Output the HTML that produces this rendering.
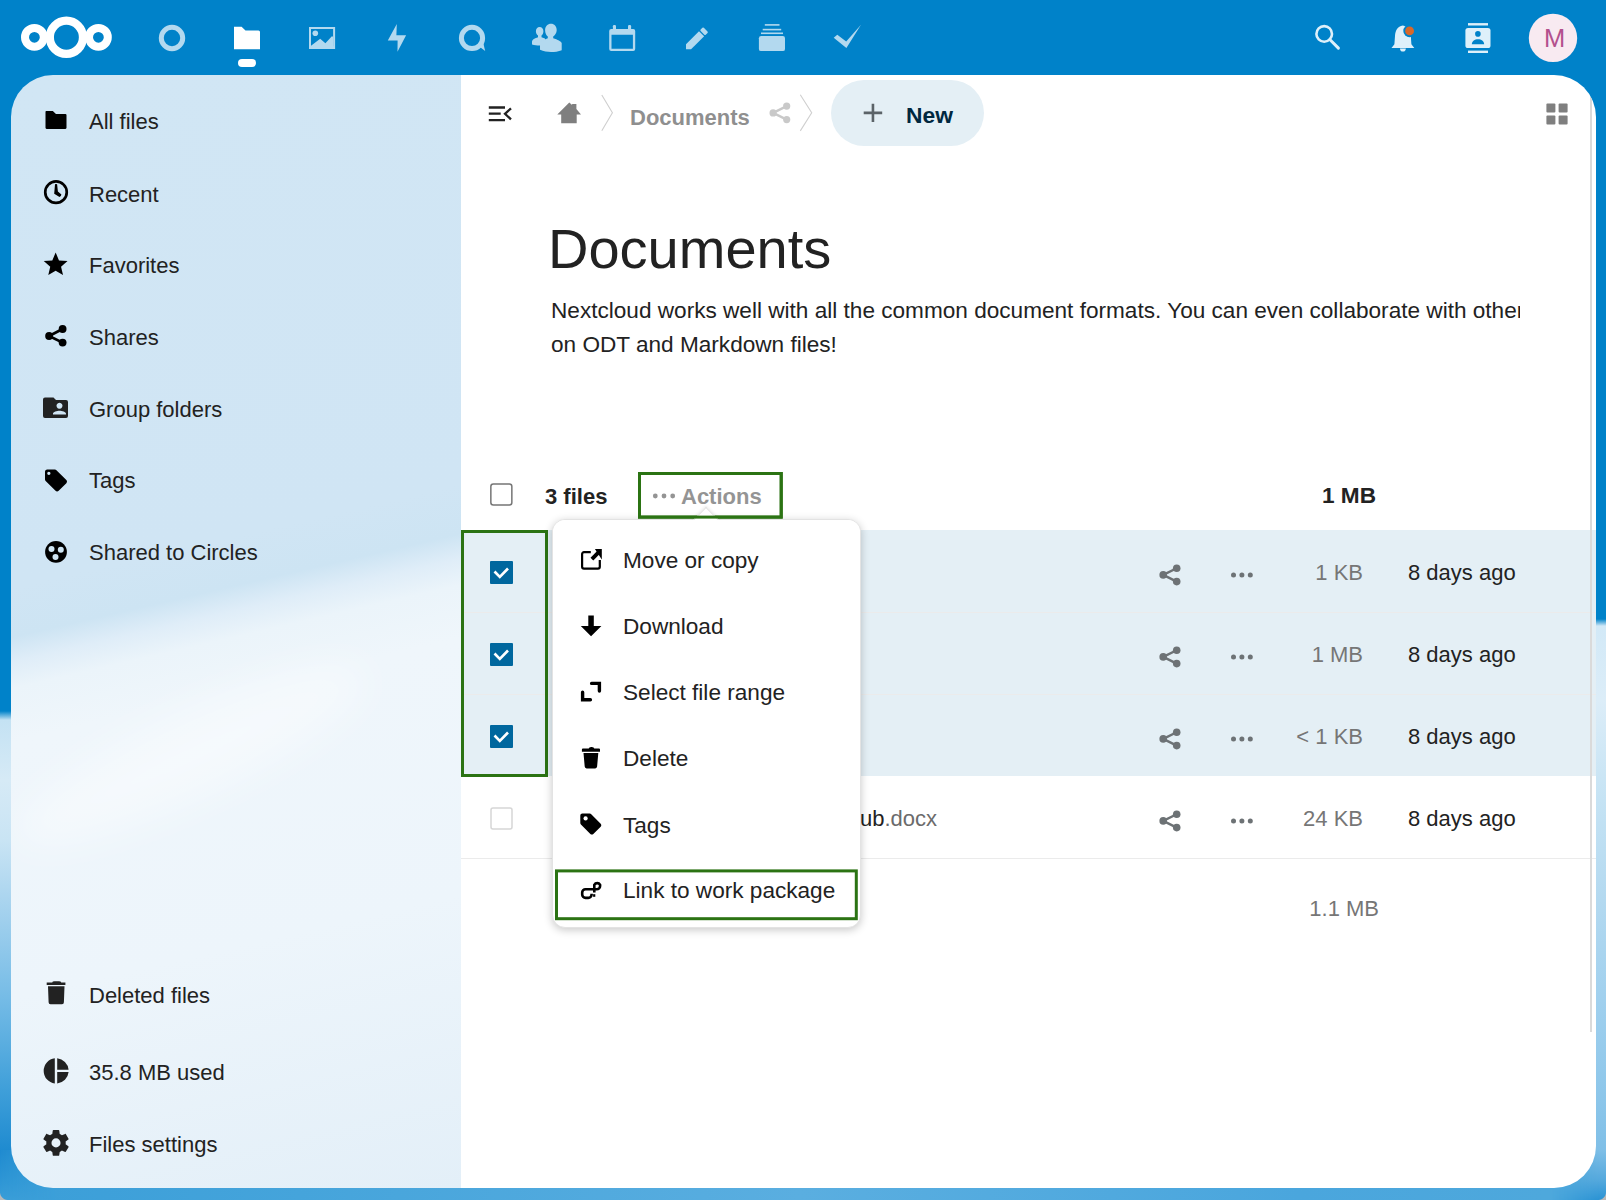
<!DOCTYPE html>
<html><head><meta charset="utf-8">
<style>
html,body{margin:0;padding:0;width:1606px;height:1200px;overflow:hidden;}
body{position:relative;background:#0082c9;font-family:"Liberation Sans",sans-serif;color:#222;}
.a{position:absolute;}
svg{position:absolute;overflow:visible;}
.t{position:absolute;white-space:nowrap;font-size:22px;line-height:30px;height:30px;}
.b{font-weight:bold;}
</style></head><body>
<!-- background strips -->
<div class="a" id="bgl" style="left:0;top:0;width:60px;height:1200px;background:linear-gradient(180deg,#0082c9 0,#0082c9 711px,#c4e2f3 720px,#d6eaf6 780px,#c9e4f4 840px,#a5d2ee 910px,#74bbe6 1000px,#3f9fd9 1090px,#1f8bd0 1150px,#2d96d5 1180px,#3a9ed8 1200px);"></div>
<div class="a" id="bgr" style="left:1546px;top:0;width:60px;height:1200px;background:linear-gradient(180deg,#0082c9 0,#0082c9 619px,#d2e9f7 626px,#dcedf8 700px,#c5e3f4 800px,#b3d9f0 900px,#a0d0ee 1000px,#8cc6ea 1100px,#7fbfe7 1150px,#55a9dd 1180px,#2a93d4 1200px);"></div>
<div class="a" id="bgb" style="left:0;top:1150px;width:1606px;height:50px;background:linear-gradient(90deg,#3a9ed8 0,#45a4db 300px,#5aaee0 800px,#4aa6dd 1300px,#4ea8dc 1546px);-webkit-mask-image:linear-gradient(90deg,transparent 0,#000 56px,#000 1550px,transparent 1600px);mask-image:linear-gradient(90deg,transparent 0,#000 56px,#000 1550px,transparent 1600px);"></div>

<!-- header -->
<svg width="1606" height="75" style="left:0;top:0" viewBox="0 0 1606 75">
 <g fill="none" stroke="#fff">
  <circle cx="66.4" cy="37.3" r="16.6" stroke-width="8.3"/>
  <circle cx="34.4" cy="37.3" r="9.4" stroke-width="8"/>
  <circle cx="98.4" cy="37.3" r="9.4" stroke-width="8"/>
 </g>
 <g fill="#b3d9ef">
  <!-- dashboard -->
  <circle cx="172" cy="38" r="10.7" fill="none" stroke="#b3d9ef" stroke-width="5"/>
  <!-- photos -->
  <path d="M309,26.9H335.1V49H309Z M311,28.9V46.2H333.1V28.9Z" fill-rule="evenodd"/>
  <circle cx="315.3" cy="33.3" r="2.8"/>
  <path d="M311,45.8L320.2,38.7L325.4,43.2L332.1,36.1L333.1,37.2V47H311Z"/>
  <!-- activity -->
  <path d="M396.8,24.1L387.8,40.6H397.6L397.5,51.8L406.1,35.3H396.4Z"/>
  <!-- talk -->
  <circle cx="472" cy="37.9" r="10.6" fill="none" stroke="#b3d9ef" stroke-width="5"/>
  <path d="M478.5,46L485.2,51L483,42Z"/>
  <!-- contacts -->
  <path d="M539.6,27C537.4,27 535.9,28.8 535.9,31.3C535.9,33.2 536.7,34.8 538,35.6V37.3C535,38.3 532.2,39.3 532,41.8L532,44.5C534.5,45.3 537,45.5 539.5,45.5L545,45V38.5L541.5,37.2V35.6C542.7,34.8 543.4,33.2 543.4,31.3C543.4,28.8 541.9,27 539.6,27Z"/>
  <path d="M551,23.8C547.7,23.8 545.1,26.4 545.1,30.3C545.1,33.3 546.3,35.5 547.8,36.5V38.3C544.5,39.5 540.8,40.7 540,42.5V49.8C543.5,51.5 547.5,52 551,52C554.5,52 558.5,51.5 561.7,50.2V43C561.3,41.3 557.5,39.6 553.2,38.2V36.5C554.8,35.5 556.7,33.3 556.7,30.3C556.7,26.4 554.3,23.8 551,23.8Z"/>
  <!-- calendar -->
  <path d="M611.2,28.9H633.2A2,2 0 0 1 635.2,30.9V49.1A2,2 0 0 1 633.2,51.1H611.2A2,2 0 0 1 609.2,49.1V30.9A2,2 0 0 1 611.2,28.9Z M611.5,34.7V48.8H632.9V34.7Z" fill-rule="evenodd"/>
  <rect x="612.9" y="25" width="3.1" height="7" rx="1.2"/>
  <rect x="628" y="25" width="3.1" height="7" rx="1.2"/>
  <!-- notes pencil -->
  <g transform="translate(688.55,46.75) rotate(-45)">
   <path d="M0,-3.6H18.4V3.6H0L-3.6,0Z"/>
   <rect x="19.7" y="-3.6" width="4.5" height="7.2" rx="1"/>
  </g>
  <!-- deck -->
  <rect x="764.8" y="24.1" width="14.7" height="1.6"/>
  <rect x="762.7" y="28.8" width="18.5" height="1.6"/>
  <rect x="761" y="32.5" width="22" height="1.6"/>
  <rect x="758.9" y="36" width="26.1" height="15.1" rx="2.2"/>
  <!-- tasks check -->
  <path d="M833.7,37.8L837.3,34.8L846.2,41.5L861,24.8L846.4,48Z"/>
 </g>
 <!-- files active -->
 <path d="M234,26.8H241.6L245.5,30.5H258.5A1.5,1.5 0 0 1 260,32V49.2H234Z" fill="#fff"/>
 <rect x="238" y="59" width="18" height="8" rx="4" fill="#fff"/>
 <!-- right icons -->
 <g fill="#def0fa">
  <circle cx="1324.2" cy="33.9" r="7.8" fill="none" stroke="#def0fa" stroke-width="2.6"/>
  <path d="M1329.8,39.5L1338.4,48.1" stroke="#def0fa" stroke-width="3" stroke-linecap="round" fill="none"/>
  <path d="M1402.8,25.6C1397.5,26.3 1395.3,31 1395,36L1394.4,44.3L1391.5,48H1414.3L1411.4,44.3L1410.8,36C1410.5,31 1408,26.3 1402.8,25.6Z"/>
  <path d="M1400,48.5H1405.8A2.9,3.1 0 0 1 1400,48.5Z"/>
  <circle cx="1409.6" cy="30.9" r="6.3" fill="#0082c9"/>
  <circle cx="1409.6" cy="30.9" r="4.4" fill="#d9682a"/>
  <rect x="1468" y="23.1" width="20" height="2.4"/>
  <rect x="1468" y="50.6" width="20" height="2.4"/>
  <rect x="1465.4" y="28" width="25.1" height="20" rx="2.6"/>
  <circle cx="1477.9" cy="33.9" r="2.8" fill="#0082c9"/>
  <path d="M1471.8,44.3C1472.2,40.8 1474.5,39.3 1478,39.3C1481.5,39.3 1483.8,40.8 1484.2,44.3Z" fill="#0082c9"/>
 </g>
 <circle cx="1553" cy="37.9" r="24.2" fill="#f8eaf1"/>
</svg>
<div class="t" style="left:1530.5px;top:23px;width:48px;text-align:center;font-size:25.5px;color:#b3508d;">M</div>

<!-- sidebar -->
<div class="a" id="side" style="left:11px;top:75px;width:450px;height:1113px;border-radius:42px 0 0 42px;background:linear-gradient(167deg,#d1e6f4 0,#d0e5f4 500px,#cde4f3 548px,#dfedf8 572px,#ebf4fa 598px,#eff6fb 650px,#edf5fb 900px,#e3eff8 1186px);overflow:hidden;">
 <div class="a" style="left:-10px;top:640px;width:380px;height:80px;border-radius:50%;background:rgba(255,255,255,0.4);filter:blur(18px);transform:rotate(-25deg);"></div>
</div>

<svg width="460" height="1200" style="left:0;top:0" viewBox="0 0 460 1200">
 <g fill="#000">
  <path d="M46.2,111H52.8L56,114H65.4A1.1,1.1 0 0 1 66.5,115.1V127.8A1.1,1.1 0 0 1 65.4,128.9H46.6A1.1,1.1 0 0 1 45.5,127.8V111.7A0.7,0.7 0 0 1 46.2,111Z"/>
  <circle cx="56" cy="192.2" r="10.75" fill="none" stroke="#000" stroke-width="2.7"/>
  <path d="M55,184.2Q56,183.6 57.1,184.2L57.9,191.6L61.4,194.6Q61.2,196.5 59.5,196.9L54.2,193.7Z"/>
  <path transform="translate(41.37,250.12) scale(1.19)" d="M12,17.27L18.18,21L16.54,13.97L22,9.24L14.81,8.63L12,2L9.19,8.63L2,9.24L7.45,13.97L5.82,21L12,17.27Z"/>
  <circle cx="49.1" cy="336" r="3.9"/><circle cx="62.6" cy="329" r="3.9"/><circle cx="62.6" cy="342.6" r="3.9"/><path d="M49.1,336L62.6,329M49.1,336L62.6,342.6" stroke="#000" stroke-width="2.7"/>
  <path fill="#222" fill-rule="evenodd" d="M45,397.5H53.5L56,400H66A2,2 0 0 1 68,402V416A2,2 0 0 1 66,418H45A2,2 0 0 1 43,416V399.5A2,2 0 0 1 45,397.5Z M59.5,408.8A3,3 0 1 0 59.49,408.8Z M53,414.6H66V413.8C66,411.8 62,410.8 59.5,410.8C57,410.8 53,411.8 53,413.8Z"/>
  <path transform="translate(42.8,467.3) scale(1.1)" d="M5.5,7A1.5,1.5 0 0,1 4,5.5A1.5,1.5 0 0,1 5.5,4A1.5,1.5 0 0,1 7,5.5A1.5,1.5 0 0,1 5.5,7M21.41,11.58L12.41,2.58C12.05,2.22 11.55,2 11,2H4C2.89,2 2,2.89 2,4V11C2,11.55 2.22,12.05 2.59,12.41L11.58,21.41C11.95,21.77 12.45,22 13,22C13.55,22 14.05,21.77 14.41,21.41L21.41,14.41C21.78,14.05 22,13.55 22,13C22,12.44 21.77,11.94 21.41,11.58Z"/>
  <circle cx="56" cy="551.9" r="10.9"/>
  <circle cx="51.5" cy="549" r="3" fill="#d0e6f4"/>
  <circle cx="60.8" cy="549.8" r="3" fill="#d0e6f4"/>
  <circle cx="55.5" cy="557" r="3" fill="#d0e6f4"/>
 </g>
 <g fill="#222">
  <path d="M52.2,982.6Q52.4,981.2 54.5,981.2H58.9Q61,981.2 61.2,982.6H65.4V985H46.7V982.6Z M48,986.3H64.5L63.9,1002.3A1.9,1.9 0 0 1 62,1004.2H50.5A1.9,1.9 0 0 1 48.6,1002.3Z"/>
  <path d="M54.8,1058.3V1083.5A12.7,12.7 0 0 1 54.8,1058.3Z M57.2,1058.3A12.7,12.7 0 0 1 68.6,1069.7H57.2Z M57.2,1072.1H68.6A12.7,12.7 0 0 1 57.2,1083.5Z"/>
  <path transform="translate(40.45,1127.35) scale(1.296)" d="M12,15.5A3.5,3.5 0 0,1 8.5,12A3.5,3.5 0 0,1 12,8.5A3.5,3.5 0 0,1 15.5,12A3.5,3.5 0 0,1 12,15.5M19.43,12.97C19.47,12.65 19.5,12.33 19.5,12C19.5,11.67 19.47,11.34 19.43,11L21.54,9.37C21.73,9.22 21.78,8.95 21.66,8.73L19.66,5.27C19.54,5.05 19.27,4.96 19.05,5.05L16.56,6.05C16.04,5.66 15.5,5.32 14.87,5.07L14.5,2.42C14.46,2.18 14.25,2 14,2H10C9.75,2 9.54,2.18 9.5,2.42L9.13,5.07C8.5,5.32 7.96,5.66 7.44,6.05L4.95,5.05C4.73,4.96 4.46,5.05 4.34,5.27L2.34,8.73C2.21,8.95 2.27,9.22 2.46,9.37L4.57,11C4.53,11.34 4.5,11.67 4.5,12C4.5,12.33 4.53,12.65 4.57,12.97L2.46,14.63C2.27,14.78 2.21,15.05 2.34,15.27L4.34,18.73C4.46,18.95 4.73,19.03 4.95,18.95L7.44,17.94C7.96,18.34 8.5,18.68 9.13,18.93L9.5,21.58C9.54,21.82 9.75,22 10,22H14C14.25,22 14.46,21.82 14.5,21.58L14.87,18.93C15.5,18.67 16.04,18.34 16.56,17.94L19.05,18.95C19.27,19.03 19.54,18.95 19.66,18.73L21.66,15.27C21.78,15.05 21.73,14.78 21.54,14.63L19.43,12.97Z"/>
 </g>
</svg>
<div class="t" style="left:89px;top:107.1px;">All files</div>
<div class="t" style="left:89px;top:179.6px;">Recent</div>
<div class="t" style="left:89px;top:250.9px;">Favorites</div>
<div class="t" style="left:89px;top:322.9px;">Shares</div>
<div class="t" style="left:89px;top:394.6px;">Group folders</div>
<div class="t" style="left:89px;top:465.9px;">Tags</div>
<div class="t" style="left:89px;top:538.4px;">Shared to Circles</div>
<div class="t" style="left:89px;top:980.7px;">Deleted files</div>
<div class="t" style="left:89px;top:1058.4px;">35.8 MB used</div>
<div class="t" style="left:89px;top:1130.1px;">Files settings</div>

<!-- main -->
<div class="a" id="main" style="left:461px;top:75px;width:1135px;height:1113px;border-radius:0 42px 42px 0;background:#fff;overflow:hidden;">
 <div class="a" style="left:0;top:455px;width:1135px;height:246px;background:#e4eff5;"></div>
 <div class="a" style="left:0;top:537px;width:1135px;height:1px;background:#ebebeb;"></div>
 <div class="a" style="left:0;top:619px;width:1135px;height:1px;background:#ebebeb;"></div>
 <div class="a" style="left:0;top:783px;width:1135px;height:1px;background:#ebebeb;"></div>
 <div class="a" style="left:1129px;top:22px;width:2px;height:935px;background:#dadada;"></div>
</div>

<svg width="1606" height="1200" style="left:0;top:0" viewBox="0 0 1606 1200">
 <!-- toggle -->
 <g stroke="#222" stroke-width="2.3" fill="none">
  <path d="M488.8,107.5H505M488.8,113.7H500.7M488.8,120.1H505"/>
  <path d="M511,108.3L505,113.8L511,119.4"/>
 </g>
 <path fill="#7f7f7f" d="M569.3,102.5L572.1,105.1V104H576.4V109L581,114.4H576.7V123.3H561.2V114.4H557.3Z"/>
 <g stroke="#cfcfcf" stroke-width="1.1" fill="none">
  <path d="M601.8,95L612.4,112.8L601.8,130.7"/>
  <path d="M800.3,94.7L811.7,112.8L800.3,130.9"/>
 </g>
 <g fill="#c9c9c9"><circle cx="773.1" cy="112.9" r="3.6"/><circle cx="786.7" cy="106.1" r="3.6"/><circle cx="786.7" cy="119.6" r="3.6"/><path d="M773.1,112.9L786.7,106.1M773.1,112.9L786.7,119.6" stroke="#c9c9c9" stroke-width="2.3"/></g>
 <rect x="831" y="80" width="153" height="66" rx="33" fill="#e4eff5"/>
 <path d="M863.7,112.9H882.2M872.95,103.7V122.1" stroke="#5b6368" stroke-width="2.6"/>
 <g fill="#7f7f7f">
  <rect x="1546.4" y="103.4" width="9" height="9" rx="1"/>
  <rect x="1558.6" y="103.4" width="9" height="9" rx="1"/>
  <rect x="1546.4" y="115.4" width="9" height="9" rx="1"/>
  <rect x="1558.6" y="115.4" width="9" height="9" rx="1"/>
 </g>
 <!-- table header -->
 <rect x="490.85" y="483.95" width="21" height="21" rx="2.5" fill="#fff" stroke="#767676" stroke-width="1.5"/>
 <g fill="#949494"><circle cx="655.3" cy="496" r="2.4"/><circle cx="664" cy="496" r="2.4"/><circle cx="672.7" cy="496" r="2.4"/></g>
 <rect x="639.5" y="473.5" width="141.7" height="43.6" fill="none" stroke="#2b7313" stroke-width="3"/>
 <!-- checkboxes -->
 <g fill="#00679e">
  <rect x="490" y="561" width="23" height="23" rx="1"/>
  <rect x="490" y="643" width="23" height="23" rx="1"/>
  <rect x="490" y="725" width="23" height="23" rx="1"/>
 </g>
 <g stroke="#fff" stroke-width="2.6" fill="none">
  <path d="M494.5,571.5L499.8,577L508,568.5"/>
  <path d="M494.5,653.5L499.8,659L508,650.5"/>
  <path d="M494.5,735.5L499.8,741L508,732.5"/>
 </g>
 <rect x="491" y="808" width="21" height="21" rx="2" fill="#fff" stroke="#d6d6d6" stroke-width="1.5"/>
 <rect x="462.5" y="531.5" width="84" height="244" fill="none" stroke="#2b7313" stroke-width="3"/>
 <!-- row actions -->
 <g fill="#6d7275">
  <g id="shr"><circle cx="1163.2" cy="574.9" r="3.8"/><circle cx="1176.7" cy="568.2" r="3.8"/><circle cx="1176.7" cy="581.6" r="3.8"/><path d="M1163.2,574.9L1176.7,568.2M1163.2,574.9L1176.7,581.6" stroke="#6d7275" stroke-width="2.4"/></g>
  <g transform="translate(0,82)"><g><circle cx="1163.2" cy="574.9" r="3.8"/><circle cx="1176.7" cy="568.2" r="3.8"/><circle cx="1176.7" cy="581.6" r="3.8"/><path d="M1163.2,574.9L1176.7,568.2M1163.2,574.9L1176.7,581.6" stroke="#6d7275" stroke-width="2.4"/></g></g>
  <g transform="translate(0,164)"><g><circle cx="1163.2" cy="574.9" r="3.8"/><circle cx="1176.7" cy="568.2" r="3.8"/><circle cx="1176.7" cy="581.6" r="3.8"/><path d="M1163.2,574.9L1176.7,568.2M1163.2,574.9L1176.7,581.6" stroke="#6d7275" stroke-width="2.4"/></g></g>
  <g transform="translate(0,246)"><g><circle cx="1163.2" cy="574.9" r="3.8"/><circle cx="1176.7" cy="568.2" r="3.8"/><circle cx="1176.7" cy="581.6" r="3.8"/><path d="M1163.2,574.9L1176.7,568.2M1163.2,574.9L1176.7,581.6" stroke="#6d7275" stroke-width="2.4"/></g></g>
  <g id="dts"><circle cx="1233.5" cy="575" r="2.5"/><circle cx="1241.9" cy="575" r="2.5"/><circle cx="1250.3" cy="575" r="2.5"/></g>
  <g transform="translate(0,82)"><g><circle cx="1233.5" cy="575" r="2.5"/><circle cx="1241.9" cy="575" r="2.5"/><circle cx="1250.3" cy="575" r="2.5"/></g></g>
  <g transform="translate(0,164)"><g><circle cx="1233.5" cy="575" r="2.5"/><circle cx="1241.9" cy="575" r="2.5"/><circle cx="1250.3" cy="575" r="2.5"/></g></g>
  <g transform="translate(0,246)"><g><circle cx="1233.5" cy="575" r="2.5"/><circle cx="1241.9" cy="575" r="2.5"/><circle cx="1250.3" cy="575" r="2.5"/></g></g>
 </g>
</svg>
<div class="t b" style="left:630px;top:103.2px;color:#8f8f8f;">Documents</div>
<div class="t b" style="left:906px;top:99.5px;color:#00283f;font-size:22.8px;">New</div>
<div class="t" style="left:548px;top:218.6px;font-size:56px;line-height:60px;height:60px;">Documents</div>
<div class="a" style="left:551px;top:294.4px;width:969px;height:70px;overflow:hidden;font-size:22.6px;line-height:33.2px;white-space:nowrap;">Nextcloud works well with all the common document formats. You can even collaborate with others<br>on ODT and Markdown files!</div>
<div class="t b" style="left:545px;top:481.6px;">3 files</div>
<div class="t b" style="left:681px;top:481.8px;color:#949494;">Actions</div>
<div class="t b" style="left:1322px;top:481.2px;font-size:22.6px;">1 MB</div>
<div class="t" style="left:1262px;top:558.2px;width:101px;text-align:right;color:#767676;">1 KB</div>
<div class="t" style="left:1262px;top:640.2px;width:101px;text-align:right;color:#767676;">1 MB</div>
<div class="t" style="left:1262px;top:722.2px;width:101px;text-align:right;color:#767676;">&lt; 1 KB</div>
<div class="t" style="left:1262px;top:804.2px;width:101px;text-align:right;color:#767676;">24 KB</div>
<div class="t" style="left:1278px;top:894.2px;width:101px;text-align:right;color:#767676;">1.1 MB</div>
<div class="t" style="left:1408px;top:558.2px;">8 days ago</div>
<div class="t" style="left:1408px;top:640.2px;">8 days ago</div>
<div class="t" style="left:1408px;top:722.2px;">8 days ago</div>
<div class="t" style="left:1408px;top:804.2px;">8 days ago</div>
<div class="t" style="left:860px;top:804.2px;">ub<span style="color:#6b6b6b">.docx</span></div>

<!-- popover -->
<div class="a" style="left:552px;top:519px;width:307px;height:407px;background:#fff;border:1px solid #e3e3e3;border-radius:13px;box-shadow:0 2px 9px rgba(0,0,0,0.22);"></div>
<div class="a" style="left:695.9px;top:511px;width:19px;height:19px;background:#fff;transform:rotate(45deg);border-left:1px solid #e2e2e2;border-top:1px solid #e2e2e2;box-shadow:-1px -1px 3px rgba(0,0,0,0.08);"></div>
<div class="a" style="left:553px;top:520px;width:307px;height:30px;background:#fff;border-radius:12px 12px 0 0;"></div>

<svg width="1606" height="1200" style="left:0;top:0" viewBox="0 0 1606 1200">
 <rect x="639.5" y="473.5" width="141.7" height="43.6" fill="none" stroke="#2b7313" stroke-width="3"/>
 <g fill="#000">
  <path d="M590.8,552.2H584A1.9,1.9 0 0 0 582.1,554.1V566.7A1.9,1.9 0 0 0 584,568.6H597.9A1.9,1.9 0 0 0 599.8,566.7V560.1" fill="none" stroke="#000" stroke-width="2.2"/>
  <path d="M594.9,549.1H601.8V559.4Z"/>
  <path d="M598.8,552.2L591.9,559.1" stroke="#000" stroke-width="3.9"/>
  <path d="M588.3,615.4H593.8V626H601.4L591.05,636.3L580.8,626H588.3Z"/>
  <path d="M591.6,683.4H599.4V691M582.6,692.2V699.8H590.4" fill="none" stroke="#000" stroke-width="3.4" stroke-linecap="round"/>
  <path d="M588.7,748.5Q588.9,747 591.2,747H591.8Q594.1,747 594.3,748.5H599Q600,748.5 600,749.5V751.7H581.9V749.5Q581.9,748.5 582.9,748.5Z M583.5,753H598.3L597.1,766.6A1.9,1.9 0 0 1 595.2,768.4H586.6A1.9,1.9 0 0 1 584.7,766.6Z"/>
  <path transform="translate(578.2,811.5) scale(1.05)" d="M21.41,11.58L12.41,2.58C12.05,2.22 11.55,2 11,2H4C2.89,2 2,2.89 2,4V11C2,11.55 2.22,12.05 2.59,12.41L11.58,21.41C11.95,21.77 12.45,22 13,22C13.55,22 14.05,21.77 14.41,21.41L21.41,14.41C21.78,14.05 22,13.55 22,13C22,12.44 21.77,11.94 21.41,11.58Z"/>
  <circle cx="585.6" cy="818.4" r="2.1" fill="#fff"/>
 </g>
 <path fill="none" stroke="#000" stroke-width="2.6" d="M594.3,892.5V884.9A3.3,3.3 0 0 1 600.1,884.9V885.9A3.3,3.3 0 0 1 596.8,889.2H585.5A3.3,3.3 0 0 0 582.2,892.5V894.6A3.3,3.3 0 0 0 585.5,897.9H588.3A3.3,3.3 0 0 0 591.6,894.6V893.8"/>
 <rect x="593.1" y="894.2" width="2.2" height="2.6"/>
 <rect x="556.5" y="870.9" width="299.8" height="47.8" fill="none" stroke="#2b7313" stroke-width="3"/>
</svg>
<div class="t" style="left:623px;top:546px;font-size:22.6px;">Move or copy</div>
<div class="t" style="left:623px;top:612px;font-size:22.6px;">Download</div>
<div class="t" style="left:623px;top:678.2px;font-size:22.6px;">Select file range</div>
<div class="t" style="left:623px;top:744.2px;font-size:22.6px;">Delete</div>
<div class="t" style="left:623px;top:810.6px;font-size:22.6px;">Tags</div>
<div class="t" style="left:623px;top:875.7px;font-size:22.6px;">Link to work package</div>

<div class="a" style="left:0;top:1192px;width:8px;height:8px;background:radial-gradient(circle at 100% 0,transparent 7.5px,#b9b9b9 8.5px);"></div>
<div class="a" style="left:1598px;top:1192px;width:8px;height:8px;background:radial-gradient(circle at 0 0,transparent 7.5px,#b9b9b9 8.5px);"></div>
</body></html>
